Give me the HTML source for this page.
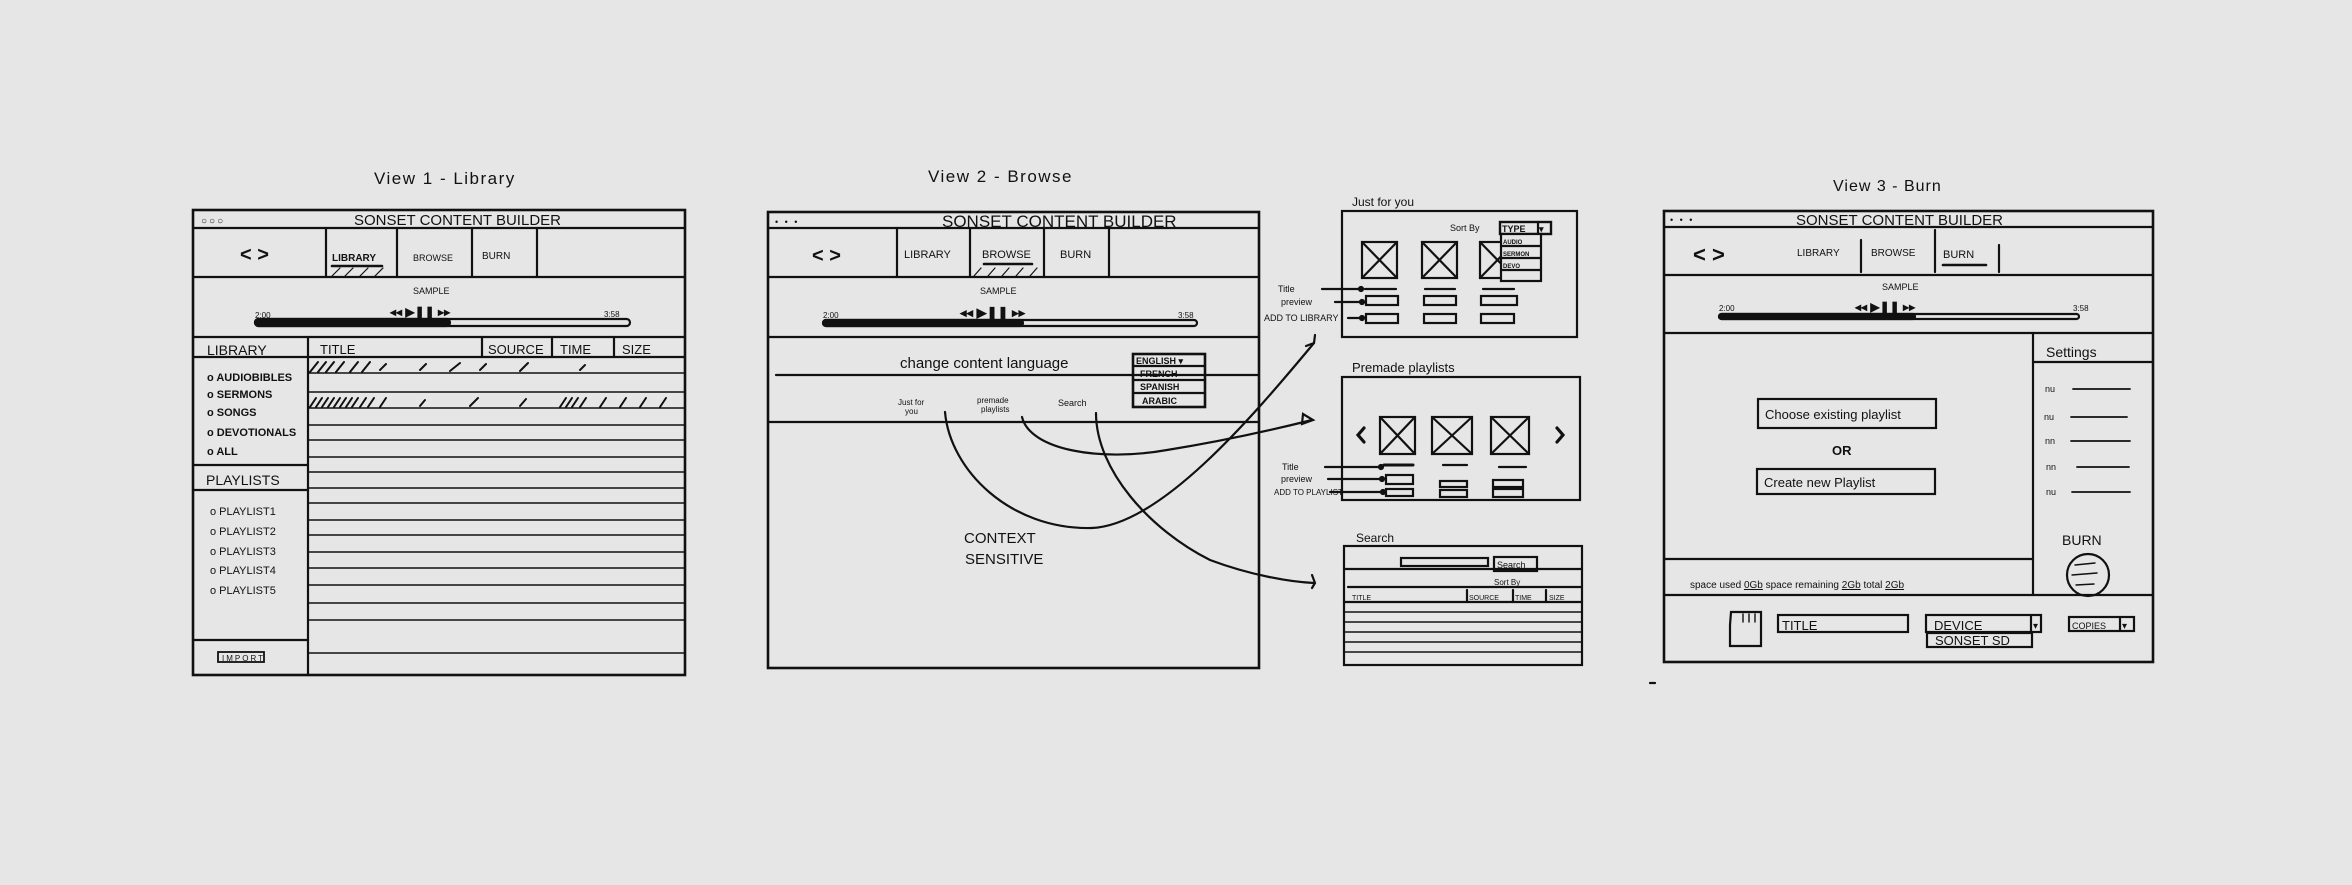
<!DOCTYPE html>
<html><head><meta charset="utf-8"><style>
html,body{margin:0;padding:0;background:#e6e6e6;}
svg{display:block}
text{font-family:"Liberation Sans",sans-serif;fill:#111;}
</style></head><body>
<svg width="2352" height="885" viewBox="0 0 2352 885" xmlns="http://www.w3.org/2000/svg">
<rect width="2352" height="885" fill="#e6e6e6"/>
<g stroke="#111" fill="none" stroke-width="2.2" stroke-linecap="round">

<!-- ========== VIEW 1 ========== -->
<rect x="193" y="210" width="492" height="465" stroke-width="2.6"/>
<line x1="193" y1="228" x2="685" y2="228"/>
<line x1="193" y1="277" x2="685" y2="277"/>
<line x1="326" y1="228" x2="326" y2="277"/>
<line x1="397" y1="228" x2="397" y2="277"/>
<line x1="472" y1="228" x2="472" y2="277"/>
<line x1="537" y1="228" x2="537" y2="277"/>
<line x1="193" y1="337" x2="685" y2="337"/>
<line x1="193" y1="357" x2="685" y2="357"/>
<line x1="308" y1="337" x2="308" y2="675"/>
<line x1="482" y1="337" x2="482" y2="357"/>
<line x1="552" y1="337" x2="552" y2="357"/>
<line x1="614" y1="337" x2="614" y2="357"/>
<line x1="193" y1="465" x2="308" y2="465"/>
<line x1="193" y1="490" x2="308" y2="490"/>
<line x1="193" y1="640" x2="308" y2="640"/>
<rect x="218" y="652" width="46" height="10" stroke-width="1.8"/>
<rect x="255" y="319" width="375" height="7" rx="3.5"/>
<rect x="255" y="319" width="195" height="7" rx="3.5" fill="#111"/>
<line x1="332" y1="266" x2="382" y2="266" stroke-width="2.6"/>
<g stroke-width="1.2"><line x1="332" y1="276" x2="340" y2="268"/><line x1="345" y1="276" x2="353" y2="268"/><line x1="360" y1="276" x2="368" y2="268"/><line x1="375" y1="276" x2="383" y2="268"/></g>
<g stroke-width="1.6">
<line x1="308" y1="373" x2="685" y2="373"/><line x1="308" y1="392" x2="685" y2="392"/><line x1="308" y1="408" x2="685" y2="408"/>
<line x1="308" y1="425" x2="685" y2="425"/><line x1="308" y1="440" x2="685" y2="440"/><line x1="308" y1="457" x2="685" y2="457"/>
<line x1="308" y1="472" x2="685" y2="472"/><line x1="308" y1="488" x2="685" y2="488"/><line x1="308" y1="503" x2="685" y2="503"/>
<line x1="308" y1="520" x2="685" y2="520"/><line x1="308" y1="535" x2="685" y2="535"/><line x1="308" y1="552" x2="685" y2="552"/>
<line x1="308" y1="568" x2="685" y2="568"/><line x1="308" y1="585" x2="685" y2="585"/><line x1="308" y1="603" x2="685" y2="603"/>
<line x1="308" y1="620" x2="685" y2="620"/><line x1="308" y1="653" x2="685" y2="653"/>
</g>
<g stroke-width="2">
<path d="M310 372 l8 -10 M318 372 l8 -10 M326 372 l8 -10 M336 372 l8 -10 M350 372 l8 -10 M362 372 l8 -10 M380 370 l6 -6 M420 370 l6 -6 M450 371 l10 -8 M480 370 l6 -6 M520 371 l8 -8 M580 370 l5 -5"/>
<path d="M310 407 l6 -9 M316 407 l6 -9 M322 407 l6 -9 M328 407 l6 -9 M334 407 l6 -9 M340 407 l6 -9 M346 407 l6 -9 M352 407 l6 -9 M360 407 l6 -9 M368 407 l6 -9 M380 407 l6 -9 M420 406 l5 -6 M470 406 l8 -8 M520 406 l6 -7 M560 407 l6 -9 M566 407 l6 -9 M572 407 l6 -9 M580 407 l6 -9 M600 407 l6 -9 M620 407 l6 -9 M640 407 l6 -9 M660 407 l6 -9"/>
</g>

<!-- ========== VIEW 2 ========== -->
<rect x="768" y="212" width="491" height="456" stroke-width="2.6"/>
<line x1="768" y1="228" x2="1259" y2="228"/>
<line x1="768" y1="277" x2="1259" y2="277"/>
<line x1="897" y1="228" x2="897" y2="277"/>
<line x1="970" y1="228" x2="970" y2="277"/>
<line x1="1044" y1="228" x2="1044" y2="277"/>
<line x1="1109" y1="228" x2="1109" y2="277"/>
<line x1="768" y1="337" x2="1259" y2="337"/>
<line x1="776" y1="375" x2="1259" y2="375"/>
<line x1="768" y1="422" x2="1259" y2="422"/>
<line x1="984" y1="264" x2="1032" y2="264" stroke-width="2.6"/>
<g stroke-width="1.2"><line x1="974" y1="276" x2="981" y2="268"/><line x1="988" y1="276" x2="995" y2="268"/><line x1="1002" y1="276" x2="1009" y2="268"/><line x1="1016" y1="276" x2="1023" y2="268"/><line x1="1030" y1="276" x2="1037" y2="268"/></g>
<rect x="823" y="320" width="374" height="6" rx="3"/>
<rect x="823" y="320" width="200" height="6" rx="3" fill="#111"/>
<rect x="1133" y="354" width="72" height="53" stroke-width="2.6"/>
<line x1="1133" y1="366" x2="1205" y2="366"/><line x1="1133" y1="380" x2="1205" y2="380"/><line x1="1133" y1="393" x2="1205" y2="393"/>
<path d="M945 412 C 950 470, 1010 530, 1092 528 C 1160 525, 1250 420, 1314 343"/>
<path d="M1314 343 l-8 3 M1314 343 l1 -8"/>
<path d="M1022 417 C 1030 450, 1100 462, 1167 450 C 1230 440, 1280 428, 1312 420"/>
<path d="M1303 414 l10 6 l-11 4 z"/>
<path d="M1096 413 C 1096 470, 1150 530, 1210 560 C 1250 575, 1290 582, 1314 583"/>
<path d="M1312 575 l3 8 l-3 5"/>

<!-- Just for you -->
<rect x="1342" y="211" width="235" height="126"/>
<rect x="1362" y="242" width="35" height="36"/><path d="M1362 242 L1397 278 M1397 242 L1362 278"/>
<rect x="1422" y="242" width="35" height="36"/><path d="M1422 242 L1457 278 M1457 242 L1422 278"/>
<rect x="1480" y="242" width="35" height="36"/><path d="M1480 242 L1515 278 M1515 242 L1480 278"/>
<rect x="1500" y="222" width="51" height="12" stroke-width="2.4"/>
<line x1="1538" y1="222" x2="1538" y2="234"/>
<rect x="1501" y="234" width="40" height="47" fill="#e6e6e6"/>
<line x1="1501" y1="246" x2="1541" y2="246"/><line x1="1501" y1="258" x2="1541" y2="258"/><line x1="1501" y1="270" x2="1541" y2="270"/>
<line x1="1365" y1="289" x2="1396" y2="289"/><line x1="1425" y1="289" x2="1455" y2="289"/><line x1="1483" y1="289" x2="1514" y2="289"/>
<rect x="1366" y="296" width="32" height="9"/><rect x="1424" y="296" width="32" height="9"/><rect x="1481" y="296" width="36" height="9"/>
<rect x="1366" y="314" width="32" height="9"/><rect x="1424" y="314" width="32" height="9"/><rect x="1481" y="314" width="33" height="9"/>
<path d="M1322 289 L1360 289 M1335 302 L1364 302 M1348 318 L1364 318"/>
<circle cx="1361" cy="289" r="2" fill="#111"/><circle cx="1362" cy="302" r="2" fill="#111"/><circle cx="1362" cy="318" r="2" fill="#111"/>

<!-- Premade -->
<rect x="1342" y="377" width="238" height="123"/>
<rect x="1380" y="417" width="35" height="37"/><path d="M1380 417 L1415 454 M1415 417 L1380 454"/>
<rect x="1432" y="417" width="40" height="37"/><path d="M1432 417 L1472 454 M1472 417 L1432 454"/>
<rect x="1491" y="417" width="38" height="37"/><path d="M1491 417 L1529 454 M1529 417 L1491 454"/>
<path d="M1364 428 l-6 7 l6 7 M1557 428 l6 7 l-6 7" stroke-width="3.2"/>
<line x1="1384" y1="465" x2="1413" y2="465" stroke-width="3"/><line x1="1443" y1="465" x2="1467" y2="465"/><line x1="1499" y1="467" x2="1526" y2="467"/>
<rect x="1386" y="475" width="27" height="9"/><rect x="1440" y="481" width="27" height="6"/><rect x="1493" y="480" width="30" height="7"/>
<rect x="1386" y="489" width="27" height="7"/><rect x="1440" y="490" width="27" height="7"/><rect x="1493" y="489" width="30" height="8"/>
<path d="M1325 467 L1380 467 M1328 479 L1382 479 M1330 492 L1383 492"/>
<circle cx="1381" cy="467" r="2" fill="#111"/><circle cx="1382" cy="479" r="2" fill="#111"/><circle cx="1383" cy="492" r="2" fill="#111"/>

<!-- Search -->
<rect x="1344" y="546" width="238" height="119"/>
<rect x="1401" y="558" width="87" height="8"/>
<rect x="1494" y="557" width="43" height="14"/>
<line x1="1344" y1="569" x2="1582" y2="569"/>
<line x1="1348" y1="587" x2="1582" y2="587"/>
<line x1="1344" y1="602" x2="1582" y2="602"/>
<line x1="1467" y1="590" x2="1467" y2="602"/><line x1="1513" y1="590" x2="1513" y2="602"/><line x1="1546" y1="590" x2="1546" y2="602"/>
<g stroke-width="1.6"><line x1="1344" y1="612" x2="1582" y2="612"/><line x1="1344" y1="622" x2="1582" y2="622"/><line x1="1344" y1="632" x2="1582" y2="632"/><line x1="1344" y1="642" x2="1582" y2="642"/><line x1="1344" y1="652" x2="1582" y2="652"/></g>

<!-- ========== VIEW 3 ========== -->
<rect x="1664" y="211" width="489" height="451" stroke-width="2.6"/>
<line x1="1664" y1="227" x2="2153" y2="227"/>
<line x1="1664" y1="275" x2="2153" y2="275"/>
<line x1="1861" y1="240" x2="1861" y2="272"/>
<line x1="1935" y1="230" x2="1935" y2="272"/>
<line x1="1999" y1="245" x2="1999" y2="272"/>
<line x1="1943" y1="265" x2="1986" y2="265" stroke-width="2.6"/>
<line x1="1664" y1="333" x2="2153" y2="333"/>
<rect x="1719" y="314" width="360" height="5" rx="2.5"/>
<rect x="1719" y="314" width="196" height="5" rx="2.5" fill="#111"/>
<line x1="2033" y1="333" x2="2033" y2="595"/>
<line x1="2033" y1="362" x2="2153" y2="362"/>
<line x1="1664" y1="559" x2="2033" y2="559"/>
<line x1="1664" y1="595" x2="2153" y2="595"/>
<rect x="1758" y="399" width="178" height="29"/>
<rect x="1757" y="469" width="178" height="25"/>
<g stroke-width="1.8">
<line x1="2073" y1="389" x2="2130" y2="389"/><line x1="2071" y1="417" x2="2127" y2="417"/>
<line x1="2071" y1="441" x2="2130" y2="441"/><line x1="2077" y1="467" x2="2129" y2="467"/><line x1="2072" y1="492" x2="2130" y2="492"/>
</g>
<circle cx="2088" cy="575" r="21"/>
<path d="M2075 565 l20 -2 M2072 575 l25 -2 M2076 585 l18 -1" stroke-width="1.4"/>
<path d="M1731 612 L1761 612 L1761 646 L1730 646 L1730 625 Z"/>
<path d="M1743 614 v8 M1749 614 v8 M1755 614 v8" stroke-width="1.4"/>
<rect x="1778" y="615" width="130" height="17"/>
<rect x="1926" y="615" width="115" height="17"/>
<line x1="2031" y1="615" x2="2031" y2="632"/>
<rect x="1927" y="633" width="105" height="14"/>
<rect x="2069" y="617" width="65" height="14"/>
<line x1="2120" y1="617" x2="2120" y2="631"/>
<path d="M1650 683 l5 0"/>
</g>

<g font-size="11">
<text x="374" y="184" font-size="17" letter-spacing="1.5">View 1 - Library</text>
<text x="928" y="182" font-size="17" letter-spacing="1.5">View 2 - Browse</text>
<text x="1833" y="191" font-size="16" letter-spacing="1">View 3 - Burn</text>

<text x="201" y="224" font-size="10" letter-spacing="2">○○○</text>
<text x="354" y="225" font-size="15">SONSET CONTENT BUILDER</text>
<text x="240" y="261" font-size="20" font-weight="bold">&lt; &gt;</text>
<text x="332" y="261" font-size="10" font-weight="bold">LIBRARY</text>
<text x="413" y="261" font-size="9">BROWSE</text>
<text x="482" y="259" font-size="10">BURN</text>
<text x="413" y="294" font-size="9">SAMPLE</text>
<text x="255" y="318" font-size="8">2:00</text>
<text x="604" y="317" font-size="8">3:58</text>
<text x="390" y="316" font-size="12" font-weight="bold">◂◂ ▶❚❚ ▸▸</text>
<text x="207" y="355" font-size="14">LIBRARY</text>
<text x="320" y="354" font-size="13">TITLE</text>
<text x="488" y="354" font-size="13">SOURCE</text>
<text x="560" y="354" font-size="13">TIME</text>
<text x="622" y="354" font-size="13">SIZE</text>
<g font-size="11" font-weight="bold">
<text x="207" y="381">o AUDIOBIBLES</text>
<text x="207" y="398">o SERMONS</text>
<text x="207" y="416">o SONGS</text>
<text x="207" y="436">o DEVOTIONALS</text>
<text x="207" y="455">o ALL</text>
</g>
<text x="206" y="485" font-size="14">PLAYLISTS</text>
<g font-size="11">
<text x="210" y="515">o PLAYLIST1</text>
<text x="210" y="535">o PLAYLIST2</text>
<text x="210" y="555">o PLAYLIST3</text>
<text x="210" y="574">o PLAYLIST4</text>
<text x="210" y="594">o PLAYLIST5</text>
</g>
<text x="222" y="661" font-size="8" letter-spacing="2">IMPORT</text>

<text x="775" y="225" font-size="9" letter-spacing="2">• • •</text>
<text x="942" y="227" font-size="17">SONSET CONTENT BUILDER</text>
<text x="812" y="262" font-size="20" font-weight="bold">&lt; &gt;</text>
<text x="904" y="258" font-size="11">LIBRARY</text>
<text x="982" y="258" font-size="11">BROWSE</text>
<text x="1060" y="258" font-size="11">BURN</text>
<text x="980" y="294" font-size="9">SAMPLE</text>
<text x="823" y="318" font-size="8">2:00</text>
<text x="1178" y="318" font-size="8">3:58</text>
<text x="960" y="317" font-size="13" font-weight="bold">◂◂ ▶❚❚ ▸▸</text>
<text x="900" y="368" font-size="15">change content language</text>
<g font-size="9" font-weight="bold"><text x="1136" y="364">ENGLISH ▾</text><text x="1140" y="377">FRENCH</text><text x="1140" y="390">SPANISH</text><text x="1142" y="404">ARABIC</text></g>
<text x="898" y="405" font-size="8">Just for</text><text x="905" y="414" font-size="8">you</text>
<text x="977" y="403" font-size="8">premade</text><text x="981" y="412" font-size="8">playlists</text>
<text x="1058" y="406" font-size="9">Search</text>
<text x="964" y="543" font-size="15">CONTEXT</text>
<text x="965" y="564" font-size="15">SENSITIVE</text>

<text x="1352" y="206" font-size="12">Just for you</text>
<text x="1450" y="231" font-size="9">Sort By</text>
<text x="1502" y="232" font-size="9" font-weight="bold">TYPE</text>
<text x="1539" y="232" font-size="9" font-weight="bold">▾</text>
<g font-size="6" font-weight="bold"><text x="1503" y="244">AUDIO</text><text x="1503" y="256">SERMON</text><text x="1503" y="268">DEVO</text></g>
<g font-size="9"><text x="1278" y="292">Title</text><text x="1281" y="305">preview</text><text x="1264" y="321">ADD TO LIBRARY</text></g>

<text x="1352" y="372" font-size="13">Premade playlists</text>
<g font-size="9"><text x="1282" y="470">Title</text><text x="1281" y="482">preview</text><text x="1274" y="495" font-size="8">ADD TO PLAYLIST</text></g>

<text x="1356" y="542" font-size="12">Search</text>
<text x="1497" y="568" font-size="9">Search</text>
<text x="1494" y="585" font-size="8">Sort By</text>
<g font-size="7"><text x="1352" y="600">TITLE</text><text x="1469" y="600">SOURCE</text><text x="1515" y="600">TIME</text><text x="1549" y="600">SIZE</text></g>

<text x="1670" y="223" font-size="9" letter-spacing="2">• • •</text>
<text x="1796" y="225" font-size="15">SONSET CONTENT BUILDER</text>
<text x="1693" y="262" font-size="22" font-weight="bold">&lt; &gt;</text>
<text x="1797" y="256" font-size="10">LIBRARY</text>
<text x="1871" y="256" font-size="10">BROWSE</text>
<text x="1943" y="258" font-size="11">BURN</text>
<text x="1882" y="290" font-size="9">SAMPLE</text>
<text x="1719" y="311" font-size="8">2:00</text>
<text x="2073" y="311" font-size="8">3:58</text>
<text x="1855" y="311" font-size="12" font-weight="bold">◂◂ ▶❚❚ ▸▸</text>
<text x="2046" y="357" font-size="14">Settings</text>
<g font-size="9"><text x="2045" y="392">nu</text><text x="2044" y="420">nu</text><text x="2045" y="444">nn</text><text x="2046" y="470">nn</text><text x="2046" y="495">nu</text></g>
<text x="2062" y="545" font-size="14">BURN</text>
<text x="1765" y="419" font-size="13">Choose existing playlist</text>
<text x="1832" y="455" font-size="13" font-weight="bold">OR</text>
<text x="1764" y="487" font-size="13">Create new Playlist</text>
<text x="1690" y="588" font-size="10">space used <tspan text-decoration="underline">0Gb</tspan> space remaining <tspan text-decoration="underline">2Gb</tspan> total <tspan text-decoration="underline">2Gb</tspan></text>
<text x="1782" y="630" font-size="13">TITLE</text>
<text x="1934" y="630" font-size="13">DEVICE</text>
<text x="2033" y="629" font-size="10">▾</text>
<text x="1935" y="645" font-size="13">SONSET SD</text>
<text x="2072" y="629" font-size="9">COPIES</text>
<text x="2122" y="629" font-size="10">▾</text>
</g>
</svg>
</body></html>
